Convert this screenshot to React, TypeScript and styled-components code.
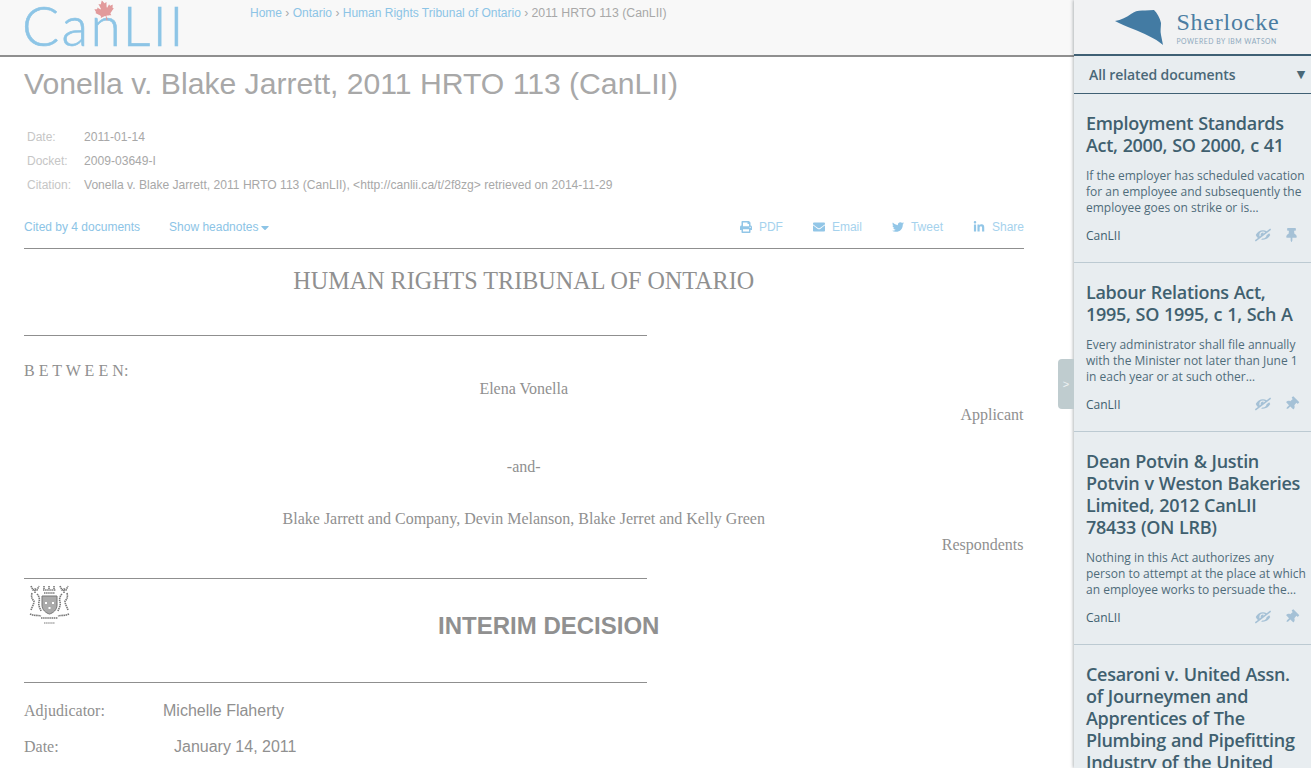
import React from "react";
import styled, { createGlobalStyle } from "styled-components";
import { FaPrint, FaEnvelope, FaTwitter, FaLinkedinIn, FaCaretDown, FaEyeSlash, FaThumbtack, FaCanadianMapleLeaf } from "react-icons/fa";

const Global = createGlobalStyle`
  html, body { margin: 0; padding: 0; height: 100%; overflow: hidden; background: #fff; }
  * { box-sizing: border-box; }
`;
const Page = styled.div`display: flex; width: 1311px; height: 768px; overflow: hidden; position: relative;`;
const Main = styled.main`width: 1074px; flex: none; font-family: "Liberation Sans", Arial, sans-serif;`;
const Header = styled.header`
  height: 57px; background: #f8f8f8; border-bottom: 2px solid #8f8f8f; padding-left: 24px; display: flex; align-items: flex-start;
`;
const LogoBox = styled.div`position: relative; width: 226px; height: 55px; flex: none;`;
const LogoText = styled.span`
  display: block; font-family: Lato, sans-serif; font-weight: 300; font-size: 55px; line-height: 55px; color: #8dc5e6; -webkit-text-stroke: .6px #8dc5e6; letter-spacing: 2.3px; margin: -2px 0 0 -2px;
`;
const Leaf = styled(FaCanadianMapleLeaf)`position: absolute; left: 70px; top: 0; width: 21px; height: 21px; color: #e29a9b; transform: rotate(-15deg);`;
const Crumbs = styled.nav`font-size: 12px; line-height: 14px; padding-top: 6px; color: #a8a8a8;`;
const CrumbLast = styled.span`font-size: 12.3px;`;
const Link = styled.a`color: #8cc4e6; text-decoration: none;`;
const Content = styled.article`padding: 0 50.5px 0 24px; color: #909090;`;
const Title = styled.h1`
  margin: 9px 0 0; font-weight: 400; font-size: 30.15px; line-height: 36px; color: #a8a8a8; white-space: nowrap;
`;
const Meta = styled.dl`margin: 23px 0 0; padding-left: 3px; font-size: 12px; line-height: 24px;`;
const MetaRow = styled.div`display: flex;`;
const MetaKey = styled.dt`width: 57px; color: #c6c6c6;`;
const MetaVal = styled.dd`margin: 0; color: #a8a8a8; font-size: 12.1px;`;
const Actions = styled.div`
  display: flex; justify-content: space-between; margin-top: 23px; height: 29px; font-size: 12px; line-height: 14px; border-bottom: 1px solid #8f8f8f; color: #8cc4e6; margin-right: -0.5px;
`;
const ActionGroup = styled.div`display: flex; gap: ${(p: { $gap: number }) => p.$gap}px;`;
const Action = styled.a`display: flex; align-items: center; height: 14px; color: #a5d2ed;
  svg { width: 12px; height: 12px; margin-right: 7px; color: #92c6e7; }`;
const CiteLink = styled.a`display: flex; align-items: center; height: 14px; color: #8cc4e6; svg { width: 8px; height: 13px; margin-left: 3px; }`;
const Court = styled.h2`
  margin: 18px 0 0; text-align: center; font: 400 24.15px/28px "Liberation Serif", serif; color: #909090;
`;
const Rule = styled.hr`margin: ${(p: { $top: number }) => p.$top}px 0 0; width: 623px; height: 1px; border: 0; background: #8f8f8f;`;
const Doc = styled.div`font: 16px/18px "Liberation Serif", serif; color: #909090;`;
const Between = styled.div`margin-top: 26px; height: 18px; letter-spacing: 0.05px;`;
const Center = styled.div`text-align: center; margin-top: ${(p: { $top: number }) => p.$top}px;`;
const Right = styled.div`text-align: right; margin-top: 8px;`;
const CrestRow = styled.div`position: relative; height: 103px;`;
const Crest = styled.svg`position: absolute; left: 5px; top: 6px; width: 41px; height: 41px;`;
const Decision = styled.h2`
  margin: 0; padding: 33px 0 0 50px; text-align: center; font: 700 24px/28px "Liberation Sans", sans-serif; color: #909090;
`;
const Para = styled.div`display: flex; font: 16px/18px "Liberation Sans", sans-serif; margin-top: ${(p: { $top: number }) => p.$top}px;`;
const ParaKey = styled.span`font-family: "Liberation Serif", serif; width: ${(p: { $w: number }) => p.$w}px;`;

const Side = styled.aside`
  flex: 1; background: #e8edf0; box-shadow: -1px 0 3px rgba(90,100,105,.45); font-family: "Open Sans", sans-serif; color: #40606f; position: relative;
`;
const SideHead = styled.div`height: 56px; background: #f1f2f3; border-bottom: 2px solid #3f6074; display: flex; align-items: center; justify-content: center; gap: 13px; padding-left: 10px; padding-top: 1px;`;
const Brand = styled.div`display: flex; flex-direction: column;`;
const BrandName = styled.span`font: 400 24px/25px "Liberation Serif", serif; letter-spacing: .8px; color: #4b7da2;`;
const BrandSub = styled.span`font: 400 6.8px/9px Lato, sans-serif; letter-spacing: .55px; color: #8ea9bd; margin-top: 2px;`;
const Filter = styled.div`
  height: 38px; border-bottom: 1px solid #3f6074; display: flex; align-items: center; justify-content: space-between; padding: 0 6px 1px 15px; font-size: 14px; font-weight: 600; letter-spacing: -.1px; color: #4a6878;
`;
const FilterArrow = styled.span`font-size: 11px; font-family: "DejaVu Sans", sans-serif;`;
const Card = styled.section`padding: 18px 5px 19px 12px; border-bottom: 1px solid #bccad2;`;
const CardTitle = styled.h3`margin: 0; font-size: 18px; line-height: 22px; font-weight: 600; letter-spacing: -.3px; word-spacing: .6px; color: #40606f;`;
const CardBody = styled.p`margin: 12px 0 0; font-size: 12px; line-height: 16px; color: #4f6c7a;`;
const CardFoot = styled.div`display: flex; align-items: center; margin-top: 11px; height: 16px; font-size: 12px;`;
const Source = styled.span`flex: 1;`;
const Eye = styled(FaEyeSlash)`width: 16px; height: 14px; color: #a5c1d6; margin-right: 14px; transform: scaleX(-1);`;
const Pin = styled(FaThumbtack)`width: 13px; height: 14px; color: #a5c1d6; margin-right: 8px; transform: rotate(${(p: { $rot: number }) => p.$rot}deg);`;
const Handle = styled.div`
  position: absolute; left: 1058px; top: 359px; width: 16px; height: 50px; background: #bfcccf; border-radius: 4px 0 0 4px; color: #eef2f3; font: 11px/50px "Liberation Sans", sans-serif; text-align: center;
`;

const cards = [
  { t: "Employment Standards Act, 2000, SO 2000, c 41", b: ["If the employer has scheduled vacation", "for an employee and subsequently the", "employee goes on strike or is…"], r: 0 },
  { t: "Labour Relations Act, 1995, SO 1995, c 1, Sch A", b: ["Every administrator shall file annually", "with the Minister not later than June 1", "in each year or at such other…"], r: 45 },
  { t: "Dean Potvin & Justin Potvin v Weston Bakeries Limited, 2012 CanLII 78433 (ON LRB)", b: ["Nothing in this Act authorizes any", "person to attempt at the place at which", "an employee works to persuade the…"], r: 45 },
];

export default function App() {
  return (
    <Page>
      <Global />
      <Main>
        <Header>
          <LogoBox>
            <LogoText>CanLII</LogoText>
            <Leaf />
          </LogoBox>
          <Crumbs>
            <Link>Home</Link> › <Link>Ontario</Link> › <Link>Human Rights Tribunal of Ontario</Link> › <CrumbLast>2011 HRTO 113 (CanLII)</CrumbLast>
          </Crumbs>
        </Header>
        <Content>
          <Title>Vonella v. Blake Jarrett, 2011 HRTO 113 (CanLII)</Title>
          <Meta>
            <MetaRow><MetaKey>Date:</MetaKey><MetaVal>2011-01-14</MetaVal></MetaRow>
            <MetaRow><MetaKey>Docket:</MetaKey><MetaVal>2009-03649-I</MetaVal></MetaRow>
            <MetaRow><MetaKey>Citation:</MetaKey><MetaVal>Vonella v. Blake Jarrett, 2011 HRTO 113 (CanLII), &lt;http://canlii.ca/t/2f8zg&gt; retrieved on 2014-11-29</MetaVal></MetaRow>
          </Meta>
          <Actions>
            <ActionGroup $gap={29}>
              <CiteLink>Cited by 4 documents</CiteLink>
              <CiteLink>Show headnotes<FaCaretDown /></CiteLink>
            </ActionGroup>
            <ActionGroup $gap={30}>
              <Action><FaPrint />PDF</Action>
              <Action><FaEnvelope />Email</Action>
              <Action><FaTwitter />Tweet</Action>
              <Action><FaLinkedinIn />Share</Action>
            </ActionGroup>
          </Actions>
          <Court>HUMAN RIGHTS TRIBUNAL OF ONTARIO</Court>
          <Rule $top={40} />
          <Doc>
            <Between>B E T W E E N:</Between>
            <Center $top={0}>Elena Vonella</Center>
            <Right>Applicant</Right>
            <Center $top={34}>-and-</Center>
            <Center $top={34}>Blake Jarrett and Company, Devin Melanson, Blake Jerret and Kelly Green</Center>
            <Right>Respondents</Right>
          </Doc>
          <Rule $top={24} />
          <CrestRow>
            <Crest viewBox="0 0 41 41" fill="none" stroke="#777" strokeWidth="1.6" strokeDasharray="1.5 .6">
              <path d="M2 1l2 4 2-1 2 1 2-4M6 5v3M15 1v3M20 1v3M25 1v3M14 5h13M15 8h11M31 1l2 4 2-1 2 1 2-4M35 5v3" />
              <path d="M3 8c-1 4 0 6 2 8 0 3-2 6-3 9M8 9c2 2 3 5 2 8-1 3 1 6 2 9M38 8c1 4 0 6-2 8 0 3 2 6 3 9M33 9c-2 2-3 5-2 8 1 3-1 6-2 9" />
              <path d="M13 11h15v9c0 5-4 8-7.500 9-3.500-1-7.500-4-7.500-9z" fill="#aaa" strokeDasharray="none" strokeWidth="1" />
              <path d="M16 18h2M23 18h2M19.500 23h2" stroke="#fff" strokeWidth="2.200" strokeDasharray="none" />
              <path d="M1 29c4 2 8 1 11 2M40 29c-4 2-8 1-11 2M12 33h17" />
              <path d="M15 38h11" strokeWidth="1" />
            </Crest>
            <Decision>INTERIM DECISION</Decision>
          </CrestRow>
          <Rule $top={0} />
          <Para $top={19}><ParaKey $w={139}>Adjudicator:</ParaKey>Michelle Flaherty</Para>
          <Para $top={18}><ParaKey $w={150}>Date:</ParaKey>January 14, 2011</Para>
        </Content>
      </Main>
      <Side>
        <SideHead>
          <svg width="48" height="37" viewBox="0 0 48 37">
            <path d="M0 12 C6 11 12 8 16 5 C20 2 24 1 30 1.500 L39 1 C42 4 45 9 46 14 C46 18 45 22 46 26 L48 36 C40 29 28 24 18 20 C11 17 5 15 0 12Z" fill="#437ba3" />
          </svg>
          <Brand>
            <BrandName>Sherlocke</BrandName>
            <BrandSub>POWERED BY IBM WATSON</BrandSub>
          </Brand>
        </SideHead>
        <Filter>All related documents<FilterArrow>▼</FilterArrow></Filter>
        {cards.map((c) => (
          <Card key={c.t}>
            <CardTitle>{c.t}</CardTitle>
            <CardBody>{c.b.map((l) => <React.Fragment key={l}>{l}<br /></React.Fragment>)}</CardBody>
            <CardFoot><Source>CanLII</Source><Eye /><Pin $rot={c.r} /></CardFoot>
          </Card>
        ))}
        <Card>
          <CardTitle>Cesaroni v. United Assn. of Journeymen and Apprentices of The Plumbing and Pipefitting Industry of the United</CardTitle>
        </Card>
      </Side>
      <Handle>&gt;</Handle>
    </Page>
  );
}
